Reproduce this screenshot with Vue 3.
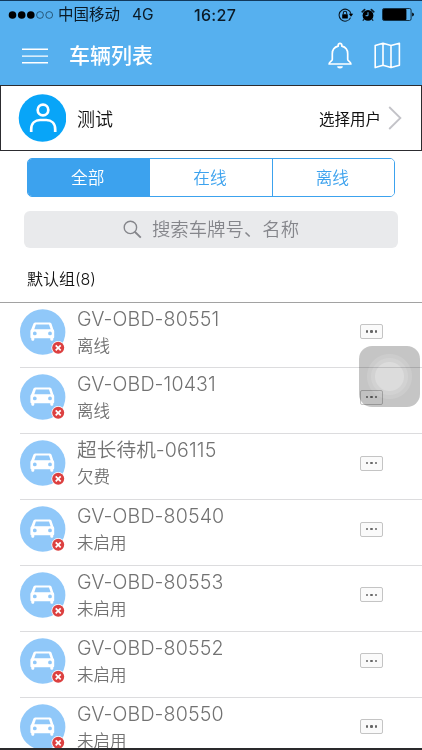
<script setup>
import { ref } from 'vue'

const tabs = ['全部', '在线', '离线']
const active = ref(0)

const cars = ref([
  { name: 'GV-OBD-80551', state: '离线' },
  { name: 'GV-OBD-10431', state: '离线' },
  { name: '超长待机-06115', state: '欠费' },
  { name: 'GV-OBD-80540', state: '未启用' },
  { name: 'GV-OBD-80553', state: '未启用' },
  { name: 'GV-OBD-80552', state: '未启用' },
  { name: 'GV-OBD-80550', state: '未启用' },
])
</script>

<template>
  <div class="app">
    <header class="top">
      <div class="status">
        <svg class="signal" width="46" height="10" viewBox="0 0 46 10">
          <circle cx="4.5" cy="5" r="3.8" />
          <circle cx="13.7" cy="5" r="3.8" />
          <circle cx="22.8" cy="5" r="3.8" />
          <circle class="hollow" cx="32" cy="5" r="3.4" />
          <circle class="hollow" cx="41.2" cy="5" r="3.4" />
        </svg>
        <span class="carrier">中国移动</span>
        <span class="net">4G</span>
        <span class="time">16:27</span>
        <svg class="lock" width="16" height="14" viewBox="0 0 16 14">
          <path d="M12.6 9.6A6 6 0 1 1 13 6" fill="none" stroke="#0b1a26" stroke-width="1.1" />
          <path d="M10.8 5.8h4.4l-2.2 3z" />
          <rect x="4.2" y="6.2" width="5.6" height="4.3" rx=".5" />
          <path d="M5.3 6.5V5a1.7 1.7 0 0 1 3.4 0v1.5" fill="none" stroke="#0b1a26" stroke-width="1.1" />
        </svg>
        <svg class="alarm" width="14" height="14" viewBox="0 0 14 14">
          <circle cx="7" cy="7.4" r="5.4" />
          <path d="M1.2 3.8 3.6 1.6M12.8 3.8 10.4 1.6" stroke="#0b1a26" stroke-width="1.7" stroke-linecap="round" />
          <path d="M2.8 11.2 1.9 12.8M11.2 11.2l.9 1.6" stroke="#0b1a26" stroke-width="1.2" />
          <path d="M7 4.2v3.5H4.6" fill="none" stroke="#56b0ef" stroke-width="1" />
        </svg>
        <svg class="battery" width="33" height="13" viewBox="0 0 33 13">
          <rect x=".5" y=".5" width="28.6" height="12" rx="1.6" fill="none" stroke="#0b2536" stroke-width=".9" />
          <rect x="1" y="1" width="23.4" height="11" rx=".8" fill="#000" />
          <path d="M30.2 4.4q1.7.4 1.7 2.1t-1.7 2.1z" />
        </svg>
      </div>
      <div class="nav">
        <svg class="menu" width="26" height="16" viewBox="0 0 26 16">
          <path d="M0 1.2h26M0 8.1h26M0 14.8h26" stroke="#fff" stroke-width="1.4" />
        </svg>
        <h1 class="title">车辆列表</h1>
        <svg class="bell" width="26" height="28" viewBox="0 0 26 28" fill="none" stroke="#fff" stroke-width="1.7" stroke-linejoin="round">
          <path d="M11.2 4.2V3.1a1.8 1.8 0 0 1 3.6 0v1.1c3.7.9 5.9 3.9 5.9 7.6v5.6c0 1.6 3.2 2.6 3.2 4.6H2.1c0-2 3.2-3 3.2-4.6v-5.6c0-3.7 2.2-6.7 5.9-7.6z" />
          <path d="M10.2 24.2h5.6a2.8 2.2 0 0 1-5.6 0z" fill="#fff" stroke="none" />
        </svg>
        <svg class="map" width="27" height="27" viewBox="0 0 27 27" fill="none" stroke="#fff" stroke-width="1.6" stroke-linejoin="round">
          <path d="M1.2 3.6 9 1.2l8 2.4 8.4-2.4v22L17 25.6l-8-2.4-7.8 2.4zM9 1.2v22M17 3.6v22" />
        </svg>
      </div>
    </header>

    <section class="user">
      <svg class="avatar" width="48" height="48" viewBox="0 0 48 48">
        <circle cx="24.500" cy="24" r="23.8" fill="#08a5f8" />
        <g fill="none" stroke="#fff" stroke-width="2.7">
          <circle cx="25" cy="16" r="5.3" />
          <path d="M13.200 38v-2.700c0-6 4-9.300 9-9.300h6c5 0 9 3.300 9 9.300V38" />
        </g>
      </svg>
      <span class="user-name">测试</span>
      <span class="pick">选择用户</span>
      <svg class="chevron" width="14" height="24" viewBox="0 0 14 24">
        <path d="M1.2 1 12.4 12 1.2 23" fill="none" stroke="#c3c3c8" stroke-width="1.8" />
      </svg>
    </section>

    <div class="tabs">
      <button
        v-for="(t, i) in tabs"
        :key="t"
        class="tab"
        :class="{ on: active === i }"
        @click="active = i"
      >
        {{ t }}
      </button>
    </div>

    <div class="search">
      <svg width="19" height="19" viewBox="0 0 19 19" fill="none" stroke="#85868b">
        <circle cx="7.4" cy="7.4" r="6.2" stroke-width="1.4" />
        <path d="m11.8 11.8 6 5.8" stroke-width="1.9" />
      </svg>
      <span>搜索车牌号、名称</span>
    </div>

    <div class="group">默认组(8)</div>

    <ul class="list">
      <li v-for="c in cars" :key="c.name" class="row">
        <svg class="car" width="47" height="47" viewBox="0 0 47 47">
          <circle cx="22.7" cy="23" r="22.7" fill="#90c8f9" />
          <path
            fill="#fff"
            fill-rule="evenodd"
            d="M15.700 13.400h13.600c1.200 0 1.900.5 2.300 1.500l1.700 5.300c.5.500.9 1 .9 1.700v6.300c0 .7-.3 1-.9 1v1.300c0 1.800-3 1.800-3 0v-1.300H14.300v1.300c0 1.800-3 1.800-3 0v-1.300c-.6 0-.9-.3-.9-1v-6.300c0-.7.400-1.200.9-1.700l2-5.300c.4-1 1.200-1.500 2.400-1.500zM15.900 15.500l-1.600 4.700h16.300l-1.600-4.700zM14.800 22.500a1.900 1.900 0 1 0 0 3.800 1.900 1.900 0 0 0 0-3.800zM30 22.500a1.900 1.900 0 1 0 0 3.800 1.900 1.900 0 0 0 0-3.800z"
          />
          <circle cx="38.2" cy="38.8" r="6.8" fill="#fff" />
          <circle cx="38.2" cy="38.8" r="6" fill="#dc4040" />
          <path d="m35.7 36.3 5 5m0-5-5 5" stroke="#fff" stroke-width="1.7" />
        </svg>
        <div class="info">
          <div class="name">{{ c.name }}</div>
          <div class="state">{{ c.state }}</div>
        </div>
        <button class="more"><i></i><i></i><i></i></button>
      </li>
    </ul>

    <div class="assist"></div>
  </div>
</template>

<style>
body {
  margin: 0;
  background: #fff;
}
</style>

<style scoped>
.app {
  position: relative;
  box-sizing: border-box;
  height: 750px;
  overflow: hidden;
  border-bottom: 2px solid #2a2a2c;
  background: #fff;
  color: #111;
  font-family: Inter, 'Noto Sans CJK SC', sans-serif;
}
.top {
  box-sizing: border-box;
  height: 85px;
  background: #56b0ef;
  border-top: 1px solid #12395c;
}
.status {
  display: flex;
  align-items: center;
  height: 27px;
  padding-left: 8px;
  color: #0b1a26;
}
.status svg {
  fill: #000;
  flex: none;
}
.signal .hollow {
  fill: none;
  stroke: #12354c;
  stroke-width: 0.7;
}
.carrier {
  margin-left: 4px;
  width: 62px;
  padding-top: 1px;
  font-size: 15.5px;
  line-height: 20px;
  white-space: nowrap;
}
.net {
  width: 62px;
  margin-left: 12px;
  font-size: 15.5px;
}
.time {
  flex: none;
  font-size: 16px;
  font-weight: 500;
  letter-spacing: 0.3px;
}
.lock {
  margin-left: auto;
}
.alarm {
  margin-left: 7px;
}
.battery {
  margin: 0 7px 0 7px;
}
.nav {
  display: flex;
  align-items: center;
  height: 55px;
  padding: 0 21px;
}
.menu {
  margin-left: 1px;
}
.title {
  margin: 0 auto 0 21px;
  color: #fff;
  font-size: 21px;
  font-weight: 500;
  line-height: 30px;
}
.map {
  margin-left: 21px;
}
.user {
  box-sizing: border-box;
  display: flex;
  align-items: center;
  height: 66px;
  padding: 0 19px 0 17px;
  border: 1px solid #2c2c30;
}
.user-name {
  margin: 0 auto 0 11px;
  font-size: 18px;
  font-weight: 350;
}
.pick {
  font-size: 15.5px;
}
.chevron {
  margin-left: 7px;
}
.tabs {
  box-sizing: border-box;
  display: flex;
  height: 39px;
  margin: 7px 27px 0;
  border: 1px solid #3ca2ee;
  border-radius: 5px;
  overflow: hidden;
}
.tab {
  flex: 1;
  padding: 0 2px 2px 0;
  border: 0;
  background: #fff;
  color: #3ca2ee;
  font: inherit;
  font-size: 16.7px;
  font-weight: 350;
}
.tab + .tab {
  border-left: 1px solid #3ca2ee;
}
.tab.on {
  background: #3ca2ee;
  color: #fff;
}
.search {
  display: flex;
  align-items: center;
  justify-content: center;
  gap: 10px;
  height: 37px;
  margin: 14px 24px 0;
  border-radius: 6px;
  background: #e9eaec;
  color: #85868b;
  font-size: 18.4px;
  font-weight: 350;
  line-height: 34px;
}
.search span {
  padding-bottom: 2px;
}
.group {
  height: 53.5px;
  padding-left: 27px;
  font-size: 16px;
  font-weight: 350;
  line-height: 63px;
}
.list {
  margin: 0;
  padding: 0;
  list-style: none;
  border-top: 1px solid #a2a2a2;
}
.row {
  display: flex;
  box-sizing: border-box;
  height: 65.85px;
  margin-left: 20px;
  padding-top: 6px;
  border-bottom: 1px solid #dcdcde;
}
.car {
  flex: none;
}
.info {
  margin-left: 10px;
  color: #727272;
  font-weight: 350;
}
.name {
  height: 22px;
  font-size: 19.6px;
  line-height: 20px;
  letter-spacing: 0.12px;
}
.state {
  margin-top: 4px;
  font-size: 16.5px;
  line-height: 22px;
}
.more {
  display: flex;
  align-items: center;
  justify-content: center;
  gap: 2px;
  box-sizing: border-box;
  width: 23px;
  height: 15px;
  margin: 15.5px 39px 0 auto;
  padding: 0;
  border: 1px solid #c4c4c4;
  border-radius: 2px;
  background: #fafafa;
}
.more i {
  width: 2.2px;
  height: 2.2px;
  border-radius: 50%;
  background: #666;
}
/* floating assistive button over the list */
.assist {
  position: absolute;
  left: 358.5px;
  top: 345.5px;
  width: 61px;
  height: 61px;
  border-radius: 13px;
  background: radial-gradient(
    circle at 50% 50%,
    #dcdcdc 14px,
    #d2d2d2 15px 18px,
    #cccccc 19px 22px,
    #c5c5c5 23px
  );
  mix-blend-mode: multiply;
}
</style>
